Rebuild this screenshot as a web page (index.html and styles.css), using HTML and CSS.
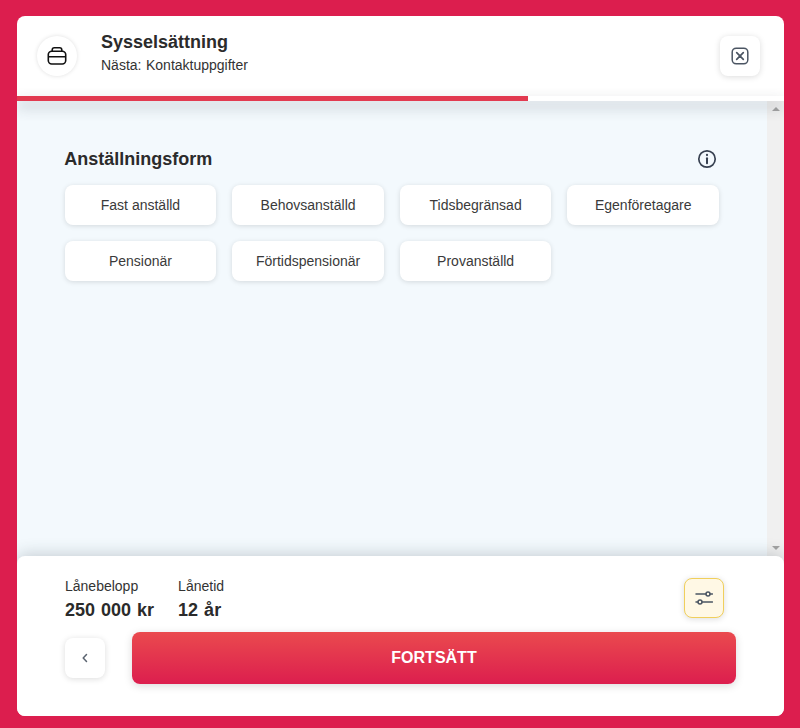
FILE: index.html
```html
<!DOCTYPE html>
<html lang="sv">
<head>
    <meta charset="UTF-8">
    <meta name="viewport" content="width=device-width, initial-scale=1.0">
    <title>Sysselsättning</title>
    <link rel="stylesheet" href="styles.css">
</head>
<body>
    <div class="card">
        <div class="header">
            <div class="step-icon">
                <svg width="20" height="20" viewBox="0 0 20 20" fill="none" stroke="#111" stroke-width="1.6" stroke-linejoin="round">
                    <rect x="1.3" y="5.2" width="17.4" height="12.8" rx="3.4"/>
                    <path d="M5.2 5.2V4C5.2 2.6 6 1.8 7.4 1.8h5.2c1.4 0 2.2.8 2.2 2.2v1.2"/>
                    <path d="M1.5 10.8h17"/>
                </svg>
            </div>
            <div class="step-text">
                <div class="step-title">Sysselsättning</div>
                <div class="step-next"><span>Nästa:</span> <span>Kontaktuppgifter</span></div>
            </div>
            <button class="icon-btn close-btn">
                <svg width="18" height="18" viewBox="0 0 18 18" fill="none" stroke="#4b5563" stroke-width="1.5" stroke-linecap="round">
                    <rect x="1.2" y="1.2" width="15.6" height="15.6" rx="4"/>
                    <path d="M5.7 5.7l6.6 6.6M12.3 5.7l-6.6 6.6" stroke-width="1.7"/>
                </svg>
            </button>
        </div>
        <div class="progress"><div class="progress-fill"></div></div>

        <div class="middle">
            <div class="content">
                <div class="section-head">
                    <h2>Anställningsform</h2>
                    <svg width="20" height="20" viewBox="0 0 20 20" fill="none" stroke="#374151" stroke-width="1.7" stroke-linecap="round">
                        <circle cx="10" cy="10" r="8.2"/>
                        <path d="M10 9.2v5" stroke-width="2"/>
                        <path d="M10 5.9v.2" stroke-width="2.2"/>
                    </svg>
                </div>
                <div class="options">
                    <button class="option">Fast anställd</button>
                    <button class="option">Behovsanställd</button>
                    <button class="option">Tidsbegränsad</button>
                    <button class="option">Egenföretagare</button>
                    <button class="option">Pensionär</button>
                    <button class="option">Förtidspensionär</button>
                    <button class="option">Provanställd</button>
                </div>
            </div>
            <div class="scrollbar">
                <span class="arrow-up"></span>
                <span class="arrow-down"></span>
            </div>
        </div>

        <div class="footer">
            <div class="summary">
                <div class="summary-item">
                    <div class="summary-label">Lånebelopp</div>
                    <div class="summary-value">250 000 kr</div>
                </div>
                <div class="summary-item">
                    <div class="summary-label">Lånetid</div>
                    <div class="summary-value">12 år</div>
                </div>
                <button class="icon-btn filter-btn">
                    <svg width="18" height="14" viewBox="0 0 18 14" fill="none" stroke="#4b5563" stroke-width="1.5" stroke-linecap="round">
                        <path d="M1 3h10M15 3h2.5M1 11h2M7 11h10.5"/>
                        <circle cx="13" cy="3" r="2"/>
                        <circle cx="5" cy="11" r="2"/>
                    </svg>
                </button>
            </div>
            <div class="actions">
                <button class="icon-btn back-btn">
                    <svg width="8" height="10" viewBox="0 0 8 10" fill="none" stroke="#5b6470" stroke-width="1.5" stroke-linecap="round" stroke-linejoin="round">
                        <path d="M5.5 1.5L2.2 5l3.3 3.5"/>
                    </svg>
                </button>
                <button class="continue-btn">FORTSÄTT</button>
            </div>
        </div>
    </div>
</body>
</html>
```

FILE: styles.css
```css
* {
    box-sizing: border-box;
    font-family: "Liberation Sans", Arial, sans-serif;
}

html, body {
    height: 100%;
}

body {
    margin: 0;
    padding: 16px 16px 12px 17px;
    background-color: #dc1e4e;
    color: #2b2b2b;
}

button {
    border: none;
    background: none;
    padding: 0;
    cursor: pointer;
}

.card {
    display: flex;
    flex-direction: column;
    height: 700px;
    background-color: #fff;
    border-radius: 8px;
    overflow: hidden;
}

.header {
    display: flex;
    align-items: center;
    height: 80px;
    padding: 0 24px 0 20px;
    flex-shrink: 0;
}

.step-icon {
    display: flex;
    align-items: center;
    justify-content: center;
    width: 40px;
    height: 40px;
    margin-right: 24px;
    border-radius: 50%;
    background-color: #fff;
    box-shadow: 0 0 4px rgba(0,0,0,0.13);
}

.step-text {
    flex: 1;
}

.step-title {
    font-size: 18px;
    font-weight: bold;
    line-height: 22px;
    margin-top: -8px;
}

.step-next {
    display: flex;
    gap: 4.5px;
    margin-top: 3px;
    font-size: 14px;
    line-height: 18px;
    color: #333;
}

.icon-btn {
    display: flex;
    align-items: center;
    justify-content: center;
    width: 40px;
    height: 40px;
    border-radius: 8px;
    background-color: #fff;
    box-shadow: 0 1px 6px rgba(0,0,0,0.14);
    flex-shrink: 0;
}

.progress {
    position: relative;
    z-index: 1;
    height: 5px;
    background-color: #fff;
    box-shadow: 0 6px 14px rgba(40,50,60,0.3);
    flex-shrink: 0;
}

.progress-fill {
    width: 511px;
    height: 5px;
    background-color: #e23a50;
}

.middle {
    display: flex;
    flex: 1;
    min-height: 0;
    margin-bottom: -8px;
}

.content {
    flex: 1;
    padding: 47px 48px 0 47.7px;
    background-color: #f3f9fd;
}

.section-head {
    display: flex;
    align-items: center;
    justify-content: space-between;
    height: 22px;
    padding-right: 2px;
    margin-bottom: 15px;
}

.section-head h2 {
    margin: 0 0 0 -0.5px;
    font-size: 18px;
    font-weight: bold;
    line-height: 22px;
}

.options {
    display: grid;
    grid-template-columns: repeat(4, 1fr);
    gap: 16px;
}

.option {
    height: 40px;
    font-size: 14px;
    color: #3a3a3a;
    background-color: #fff;
    border-radius: 8px;
    box-shadow: 0 1px 5px rgba(0,0,0,0.13);
}

.scrollbar {
    display: flex;
    flex-direction: column;
    align-items: center;
    justify-content: space-between;
    width: 17px;
    padding: 6px 0 14px;
    background-color: #f0f0f0;
}

.arrow-up {
    width: 0;
    height: 0;
    border-left: 4px solid transparent;
    border-right: 4px solid transparent;
    border-bottom: 4px solid #a3a3a3;
}

.arrow-down {
    width: 0;
    height: 0;
    border-left: 4px solid transparent;
    border-right: 4px solid transparent;
    border-top: 4px solid #a3a3a3;
}

.footer {
    position: relative;
    z-index: 1;
    height: 160px;
    padding: 21px 48px 0 48px;
    background-color: #fff;
    border-radius: 8px 8px 0 0;
    box-shadow: 0 -2px 16px rgba(40,60,70,0.22);
    flex-shrink: 0;
}

.summary {
    display: flex;
    height: 55px;
}

.summary-item {
    margin-right: 24px;
}

.summary-label {
    font-size: 14px;
    line-height: 18px;
    color: #333;
}

.summary-value {
    margin-top: 4px;
    font-size: 18px;
    font-weight: bold;
    line-height: 22px;
    word-spacing: 1px;
}

.filter-btn {
    margin: 1px 12px 0 auto;
    background-color: #fff8e5;
    border: 1px solid #f0cf5c;
}

.actions {
    display: flex;
    align-items: center;
    gap: 27px;
}

.continue-btn {
    flex: 1;
    height: 52px;
    font-size: 16px;
    font-weight: bold;
    color: #fff;
    border-radius: 8px;
    background: linear-gradient(to bottom, #ea4a4e, #dc1e4e);
    box-shadow: 0 2px 8px rgba(0,0,0,0.15);
}
```
